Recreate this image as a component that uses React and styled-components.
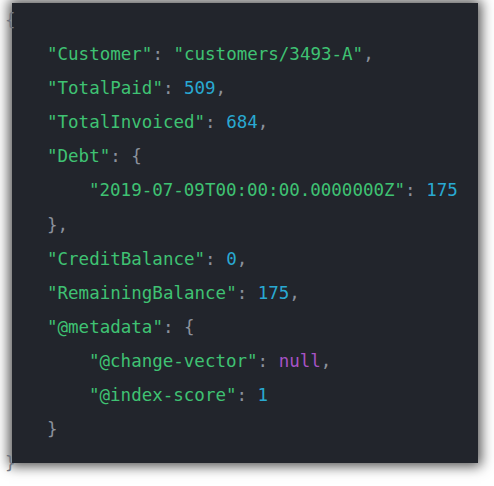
import React from 'react';
import styled, { createGlobalStyle } from 'styled-components';

const GlobalStyle = createGlobalStyle`
  html, body {
    margin: 0;
    padding: 0;
    background: #ffffff;
  }
`;

const Page = styled.div`
  width: 494px;
  height: 486px;
  padding: 12px;
  box-sizing: border-box;
`;

const Panel = styled.div`
  width: 466px;
  height: 460px;
  background: #22252c;
  box-shadow: 0 0 12px 3px rgba(0, 0, 0, 0.7);
`;

const Code = styled.pre`
  margin: -9px 0 0 -7px;
  font-family: "DejaVu Sans Mono", "Liberation Mono", monospace;
  font-size: 17.5px;
  line-height: 34.1px;
  color: #8b919c;
`;

const Line = styled.div`
  padding-left: ${p => p.indent * 42}px;
  white-space: pre;
`;

const Key = styled.span`
  color: #3fc273;
`;
const Num = styled.span`
  color: #29a9d2;
`;
const Null = styled.span`
  color: #a753c6;
`;
const Punct = styled.span`
  color: #8b919c;
`;

const Brace = styled.span`
  color: #6f7682;
`;

const Prop = ({ name, indent, children, comma }) => (
  <Line indent={indent}>
    <Key>"{name}"</Key>
    <Punct>: </Punct>
    {children}
    {comma && <Punct>,</Punct>}
  </Line>
);

export default function App() {
  return (
    <>
      <GlobalStyle />
      <Page>
        <Panel>
          <Code>
            <Line indent={0}><Brace>{'{'}</Brace></Line>
            <Prop name="Customer" indent={1} comma><Key>"customers/3493-A"</Key></Prop>
            <Prop name="TotalPaid" indent={1} comma><Num>509</Num></Prop>
            <Prop name="TotalInvoiced" indent={1} comma><Num>684</Num></Prop>
            <Prop name="Debt" indent={1}><Punct>{'{'}</Punct></Prop>
            <Prop name="2019-07-09T00:00:00.0000000Z" indent={2}><Num>175</Num></Prop>
            <Line indent={1}><Punct>{'},'}</Punct></Line>
            <Prop name="CreditBalance" indent={1} comma><Num>0</Num></Prop>
            <Prop name="RemainingBalance" indent={1} comma><Num>175</Num></Prop>
            <Prop name="@metadata" indent={1}><Punct>{'{'}</Punct></Prop>
            <Prop name="@change-vector" indent={2} comma><Null>null</Null></Prop>
            <Prop name="@index-score" indent={2}><Num>1</Num></Prop>
            <Line indent={1}><Punct>{'}'}</Punct></Line>
            <Line indent={0}><Brace>{'}'}</Brace></Line>
          </Code>
        </Panel>
      </Page>
    </>
  );
}
